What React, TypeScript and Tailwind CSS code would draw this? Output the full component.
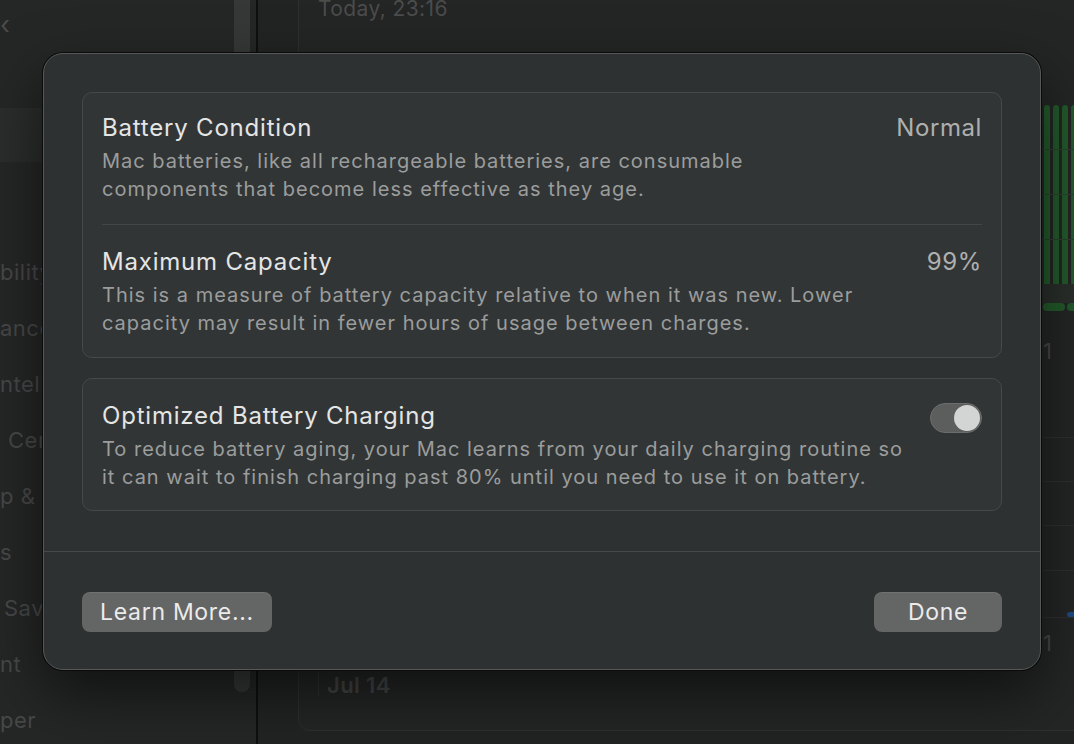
const font = { fontFamily: 'Inter, "Noto Sans", sans-serif' }

const sidebarRows = [
  { text: 'bility', pl: 'pl-0' },
  { text: 'ance', pl: 'pl-0' },
  { text: 'ntelligence', pl: 'pl-0' },
  { text: 'Center', pl: 'pl-[8px]' },
  { text: 'p & Dock', pl: 'pl-0' },
  { text: 's', pl: 'pl-0' },
  { text: 'Saver', pl: 'pl-[4px]' },
  { text: 'nt', pl: 'pl-0' },
  { text: 'per', pl: 'pl-0' },
]

function Sidebar() {
  return (
    <div className="relative h-full w-[256px] shrink-0 bg-[#252626]">
      <div className="pt-[8px] pl-0 text-[26px] leading-[34px] text-[#4a4b4b]">‹</div>
      <div className="mt-[66px] h-[54px] w-[234px] bg-[#2b2c2c]" />
      <div className="flex flex-col">
        {sidebarRows.map((r, i) => (
          <div
            key={i}
            className={`h-[56px] whitespace-nowrap text-[22px] leading-[56px] tracking-[0.5px] text-[#474848] ${r.pl} ${i === 0 ? 'mt-[82px]' : ''}`}
          >
            {r.text}
          </div>
        ))}
      </div>
      {/* scrollbar thumb */}
      <div className="absolute top-0 left-[234px] h-[692px] w-[16px] rounded-b-full bg-[#363838]" />
    </div>
  )
}

function Chart() {
  return (
    <div className="flex w-[40px] flex-col">
      <div className="h-[124px]" />
      <div className="relative flex h-[179px] gap-[3px] pl-[1px]">
        {[0, 1, 2, 3].map((i) => (
          <div key={i} className="h-full w-[6px] rounded-t-[3px] bg-[#235a2b]" />
        ))}
        <div className="absolute top-[44px] left-0 h-px w-full bg-[#2b3f2e]" />
        <div className="absolute top-[89px] left-0 h-px w-full bg-[#2b3f2e]" />
        <div className="absolute top-[134px] left-0 h-px w-full bg-[#2b3f2e]" />
      </div>
      <div className="h-[19px] bg-[#2a2f2b]" />
      <div className="flex h-[8px] gap-[2px]">
        <div className="h-full w-[22px] rounded-full bg-[#235a2b]" />
        <div className="h-full w-[16px] rounded-l-full bg-[#235a2b]" />
      </div>
      <div className="mt-[25px] text-[22px] leading-[30px] text-[#474848]">1</div>
      <div className="mt-[71px] h-px bg-[#2e2f2f]" />
      <div className="mt-[43px] h-px bg-[#2e2f2f]" />
      <div className="mt-[43px] h-px bg-[#2e2f2f]" />
      <div className="mt-[44px] h-px bg-[#2e2f2f]" />
      <div className="mt-[41px] flex h-[5px] justify-end">
        <div className="h-full w-[16px] rounded-l-full bg-[#1d4a86]" />
      </div>
      <div className="h-px bg-[#2e2f2f]" />
      <div className="mt-[10px] text-[22px] leading-[30px] text-[#474848]">1</div>
    </div>
  )
}

function Main() {
  return (
    <div className="h-full flex-1 bg-[#222323] pl-[40px]">
      <div className="-mt-[20px] h-[751px] w-[820px] rounded-[12px] border border-[#2e2f2f] bg-[#242525]">
        <div className="flex">
          <div className="flex w-[744px] flex-col pl-[19px]">
            <div className="pt-[13px] text-[21px] leading-[30px] tracking-[0.4px] text-[#4b4c4c]">Today, 23:16</div>
            <div className="mt-[617px] flex h-[59px] items-end gap-[8px]">
              <div className="h-[55px] self-start w-px bg-[#303131]" />
              <div className="text-[22px] leading-[30px] font-semibold tracking-[0.4px] text-[#444545]">Jul 14</div>
            </div>
          </div>
          <Chart />
        </div>
      </div>
    </div>
  )
}

function Row({ title, desc, value, className }: { title: string; desc: string[]; value?: string; className?: string }) {
  return (
    <div className={`flex items-start justify-between ${className ?? ''}`}>
      <div>
        <div className="text-[24px] leading-[30px] tracking-[0.8px] text-[#e4e5e5]">{title}</div>
        <div className="mt-[4px] text-[20px] leading-[28px] tracking-[1px] text-[#9b9d9d]">
          {desc.map((d) => (
            <div key={d}>{d}</div>
          ))}
        </div>
      </div>
      {value && <div className="text-[24px] leading-[30px] tracking-[0.6px] text-[#aeb0b0]">{value}</div>}
    </div>
  )
}

function Toggle() {
  return (
    <div className="mt-[2px] flex h-[30px] w-[52px] shrink-0 items-center justify-end rounded-full border border-[#6c6e6e] bg-[#5c5e5e] pr-[1px]">
      <div className="h-[26px] w-[26px] rounded-full bg-[#d3d5d5]" />
    </div>
  )
}

function Dialog() {
  return (
    <div
      className="absolute top-[53px] left-[43px] flex h-[617px] w-[998px] flex-col rounded-[20px] border border-[#565958] bg-[#2e3131] shadow-[0_0_0_1px_#0a0a0a,0_24px_60px_rgba(0,0,0,0.55)]"
      style={font}
    >
      <div className="flex flex-col gap-[20px] px-[38px] pt-[38px] pb-[40px]">
        <div className="rounded-[10px] border border-[#464949] bg-[#323535] px-[19px]">
          <Row
            className="pt-[20px] pb-[21px]"
            title="Battery Condition"
            value="Normal"
            desc={[
              'Mac batteries, like all rechargeable batteries, are consumable',
              'components that become less effective as they age.',
            ]}
          />
          <div className="h-px bg-[#444747]" />
          <Row
            className="pt-[22px] pb-[20px]"
            title="Maximum Capacity"
            value="99%"
            desc={[
              'This is a measure of battery capacity relative to when it was new. Lower',
              'capacity may result in fewer hours of usage between charges.',
            ]}
          />
        </div>
        <div className="flex items-start justify-between rounded-[10px] border border-[#464949] bg-[#323535] px-[19px] pt-[22px] pb-[19px]">
          <Row
            title="Optimized Battery Charging"
            desc={[
              'To reduce battery aging, your Mac learns from your daily charging routine so',
              'it can wait to finish charging past 80% until you need to use it on battery.',
            ]}
          />
          <Toggle />
        </div>
      </div>
      <div className="h-px bg-[#464949]" />
      <div className="flex items-center justify-between px-[38px] pt-[40px]">
        <button className="h-[40px] w-[190px] rounded-[8px] bg-[#646565] text-[23px] tracking-[0.7px] text-[#ebebeb] shadow-[inset_0_1px_0_rgba(255,255,255,0.08)]">
          Learn More...
        </button>
        <button className="h-[40px] w-[128px] rounded-[8px] bg-[#646565] text-[23px] tracking-[0.7px] text-[#ebebeb] shadow-[inset_0_1px_0_rgba(255,255,255,0.08)]">
          Done
        </button>
      </div>
    </div>
  )
}

export default function App() {
  return (
    <div className="relative flex h-[744px] w-[1074px] overflow-hidden bg-[#222323]" style={font}>
      <Sidebar />
      <div className="h-full w-[2px] shrink-0 bg-[#0f0f0f]" />
      <Main />
      <Dialog />
    </div>
  )
}
